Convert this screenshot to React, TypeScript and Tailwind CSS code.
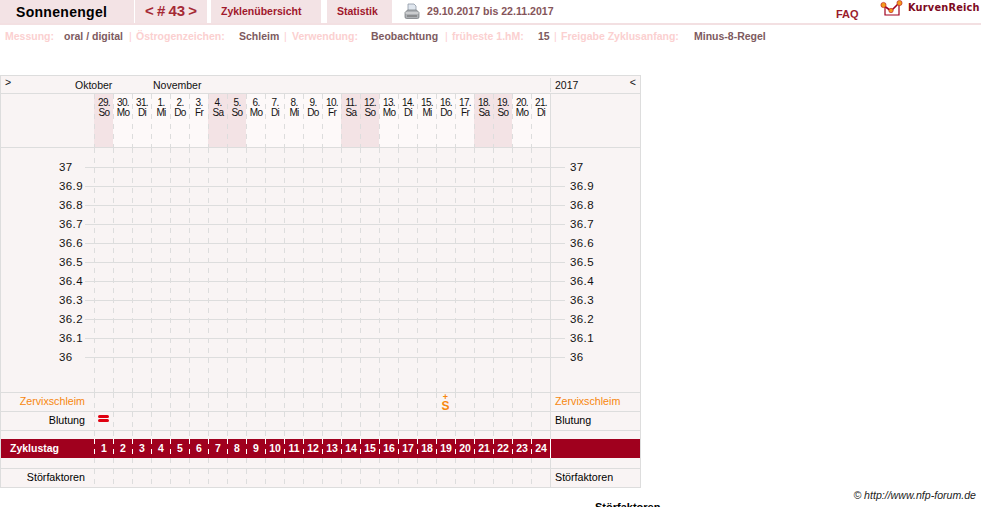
const days = [
  ["29.", "So", 1], ["30.", "Mo", 0], ["31.", "Di", 0], ["1.", "Mi", 0], ["2.", "Do", 0], ["3.", "Fr", 0],
  ["4.", "Sa", 1], ["5.", "So", 1], ["6.", "Mo", 0], ["7.", "Di", 0], ["8.", "Mi", 0], ["9.", "Do", 0],
  ["10.", "Fr", 0], ["11.", "Sa", 1], ["12.", "So", 1], ["13.", "Mo", 0], ["14.", "Di", 0], ["15.", "Mi", 0],
  ["16.", "Do", 0], ["17.", "Fr", 0], ["18.", "Sa", 1], ["19.", "So", 1], ["20.", "Mo", 0], ["21.", "Di", 0],
] as const;

const temps = ["37", "36.9", "36.8", "36.7", "36.6", "36.5", "36.4", "36.3", "36.2", "36.1", "36"];
const cols = Array.from({ length: 24 }, (_, i) => i);

const dash = "bg-[linear-gradient(to_bottom,#dddddd_50%,transparent_50%)] bg-[length:1px_10px] bg-repeat-y";
const rowGrid = "grid grid-cols-[93px_repeat(24,19px)_90px] border-b border-[#dddddd]";

function Printer() {
  return (
    <svg width="16" height="17" viewBox="0 0 16 17">
      <path d="M4 1h6l2 2v6H4z" fill="#dfe6ee" stroke="#8d98a5" strokeWidth="0.8" />
      <path d="M1 9.5 3.5 7h9L15 9.5V14a1.5 1.5 0 0 1-1.5 1.5h-11A1.5 1.5 0 0 1 1 14z" fill="#aeb1b5" stroke="#6f7377" strokeWidth="0.7" />
      <path d="M1.5 10h13" stroke="#e8e8e8" strokeWidth="1" />
      <path d="M3 13h10" stroke="#666" strokeWidth="1" />
    </svg>
  );
}

function Logo() {
  return (
    <svg width="23" height="18" viewBox="0 0 23 18" className="shrink-0">
      <path d="M5 7v8h14V4" fill="none" stroke="#a0001e" strokeWidth="1.2" />
      <path d="M3 5l8 6 8-8" fill="none" stroke="#a0001e" strokeWidth="1.6" />
      <circle cx="3.5" cy="5" r="2.6" fill="#f39a1e" stroke="#b5121b" strokeWidth="0.6" />
      <circle cx="11" cy="10.5" r="2.2" fill="#f39a1e" stroke="#b5121b" strokeWidth="0.6" />
      <circle cx="19.5" cy="3" r="2.6" fill="#f39a1e" stroke="#b5121b" strokeWidth="0.6" />
    </svg>
  );
}

function Tab({ className, children }: { className: string; children: React.ReactNode }) {
  return <div className={"h-full bg-[#f3e3e5] flex items-center " + className}>{children}</div>;
}

function Label({ children, className }: { children: React.ReactNode; className: string }) {
  return <span className={"text-[#fbd0d0] " + className}>{children}</span>;
}

function Value({ children, className }: { children: React.ReactNode; className: string }) {
  return <span className={"text-[#7d5a60] " + className}>{children}</span>;
}

function DataRow({ left, right, tone, marks, height }: {
  left?: string;
  right?: string;
  tone?: string;
  marks?: Record<number, React.ReactNode>;
  height: string;
}) {
  return (
    <div className={rowGrid + " " + height + " text-[10.7px] " + (tone || "text-black")}>
      <div className="flex items-center justify-end pr-[9px] pb-px">{left}</div>
      {cols.map((c) => (
        <div key={c} className={dash + " flex items-center justify-center"}>{marks?.[c]}</div>
      ))}
      <div className="flex items-center pl-[4px] pb-px border-l border-[#dddddd]">{right}</div>
    </div>
  );
}

export default function App() {
  return (
    <div className="relative h-[507px] w-[981px] overflow-hidden bg-white font-['Liberation_Sans',Arial,sans-serif] text-[10.5px]">
      {/* top bar */}
      <div className="flex items-center h-[25px] border-b-2 border-[#f3e0e2]">
        <Tab className="w-[134px] pl-[16px] pt-px text-[14px] font-bold text-black tracking-[0.3px]">Sonnenengel</Tab>
        <Tab className="ml-[1px] w-[72px] pl-[10px] text-[15px] font-bold text-[#a52a35] [word-spacing:-1px]">&lt; # 43 &gt;</Tab>
        <Tab className="ml-[4px] w-[110px] pl-[10px] font-bold text-[#a0182c]">Zyklenübersicht</Tab>
        <Tab className="ml-[6px] w-[65px] pl-[10px] font-bold text-[#a0182c]">Statistik</Tab>
        <div className="ml-[12px]"><Printer /></div>
        <span className="ml-[7px] font-bold text-[#85555a] text-[10.6px] w-[409px]">29.10.2017 bis 22.11.2017</span>
        <span className="mt-[5px] font-bold text-[#9a1c2c] text-[11px] w-[44px]">FAQ</span>
        <div className="-mt-[6px] flex items-center gap-[5px]">
          <Logo />
          <span className="font-['DejaVu_Sans',sans-serif] font-bold text-[9.8px] tracking-[0.2px] text-[#7d0a22]">KurvenReich</span>
        </div>
      </div>

      {/* settings line */}
      <div className="flex items-center h-[22px] pt-[2px] font-bold pl-[5px] whitespace-nowrap">
        <Label className="w-[59px]">Messung:</Label>
        <Value className="w-[65px]">oral / digital</Value>
        <Label className="w-[7px] font-normal">|</Label>
        <Label className="w-[103px]">Östrogenzeichen:</Label>
        <Value className="w-[45px]">Schleim</Value>
        <Label className="w-[8px] font-normal">|</Label>
        <Label className="w-[79px]">Verwendung:</Label>
        <Value className="w-[74px]">Beobachtung</Value>
        <Label className="w-[7px] font-normal">|</Label>
        <Label className="w-[86px]">früheste 1.hM:</Label>
        <Value className="w-[16px]">15</Value>
        <Label className="w-[7px] font-normal">|</Label>
        <Label className="w-[133px]">Freigabe Zyklusanfang:</Label>
        <Value className="">Minus-8-Regel</Value>
      </div>

      {/* chart */}
      <div className="mt-[28px] w-[641px] border border-[#dddddd] bg-[#f9f4f4] text-[#111]">
        <div className="flex h-[18px] items-center pt-[3px] border-b border-[#dddddd]">
          <span className="w-[74px] pl-[4px] -mt-[6px]">&gt;</span>
          <span className="w-[78px]">Oktober</span>
          <span className="w-[397px]">November</span>
          <div className="flex flex-1 h-full -mt-[3px] pt-[3px] items-center justify-between border-l border-[#dddddd] pl-[4px] pr-[4px]">
            <span>2017</span>
            <span className="-mt-[6px]">&lt;</span>
          </div>
        </div>

        <div className={rowGrid + " h-[54px]"}>
          <div />
          {days.map(([d, w, pink], i) => (
            <div
              key={i}
              className={
                (pink ? "bg-[#f3e3e5] " : "bg-[#fdf9f9] ") + dash +
                " text-center text-[10px] leading-[10px] pt-[4px] pl-px tracking-[-0.7px] text-[#111]"
              }
            >
              <div>{d}</div>
              <div>{w}</div>
            </div>
          ))}
          <div className="border-l border-[#dddddd]" />
        </div>

        <div className="relative h-[245px] pt-[10px] border-b border-[#dddddd]">
          <div className="absolute inset-0 grid grid-cols-[93px_repeat(24,19px)_1px]">
            <div />
            {cols.map((c) => (
              <div key={c} className={dash} />
            ))}
            <div className="bg-[#dddddd]" />
          </div>
          {temps.map((t) => (
            <div key={t} className="relative flex h-[19px] items-center text-[11.5px] tracking-[0.4px]">
              <span className="w-[84px] pl-[58px]">{t}</span>
              <div className="h-px w-[480px] bg-[#dddddd]" />
              <span className="ml-[5px]">{t}</span>
            </div>
          ))}
        </div>

        <DataRow
          height="h-[19px]"
          left="Zervixschleim"
          right="Zervixschleim"
          tone="text-[#f7870f]"
          marks={{
            18: (
              <div className="flex flex-col items-center font-bold">
                <span className="text-[9px] leading-[7px]">+</span>
                <span className="text-[12px] leading-[10px]">S</span>
              </div>
            ),
          }}
        />
        <DataRow
          height="h-[19px]"
          left="Blutung"
          right="Blutung"
          marks={{
            0: (
              <div className="flex flex-col gap-[1px] -mt-[5px]">
                <div className="h-[3px] w-[11px] rounded-full bg-[#e00010]" />
                <div className="h-[3px] w-[11px] rounded-full bg-[#e00010]" />
              </div>
            ),
          }}
        />
        <div className="grid grid-cols-[93px_repeat(24,19px)_90px] h-[8px]">
          <div />
          {cols.map((c) => (
            <div key={c} className={dash} />
          ))}
          <div className="border-l border-[#dddddd]" />
        </div>
        <div className="grid grid-cols-[93px_repeat(24,19px)_90px] h-[19px] bg-[#a0001e] font-bold text-white">
          <div className="flex items-center pl-[9px]">Zyklustag</div>
          {cols.map((c) => (
            <div
              key={c}
              className="bg-[linear-gradient(to_bottom,#ffffff_50%,transparent_50%)] bg-[length:1px_10px] bg-repeat-y flex items-center justify-center pl-px"
            >
              {c + 1}
            </div>
          ))}
          <div className="border-l border-white" />
        </div>
        <DataRow height="h-[11px]" />
        <DataRow height="h-[18px] !border-b-0" left="Störfaktoren" right="Störfaktoren" />
      </div>

      <div className="w-[976px] text-right italic text-[10.6px] leading-[14px] text-[#222]">© http://www.nfp-forum.de</div>
      <div className="-mt-[1px] ml-[595px] font-bold text-[11px] leading-[12px] text-black">Störfaktoren</div>
    </div>
  );
}
